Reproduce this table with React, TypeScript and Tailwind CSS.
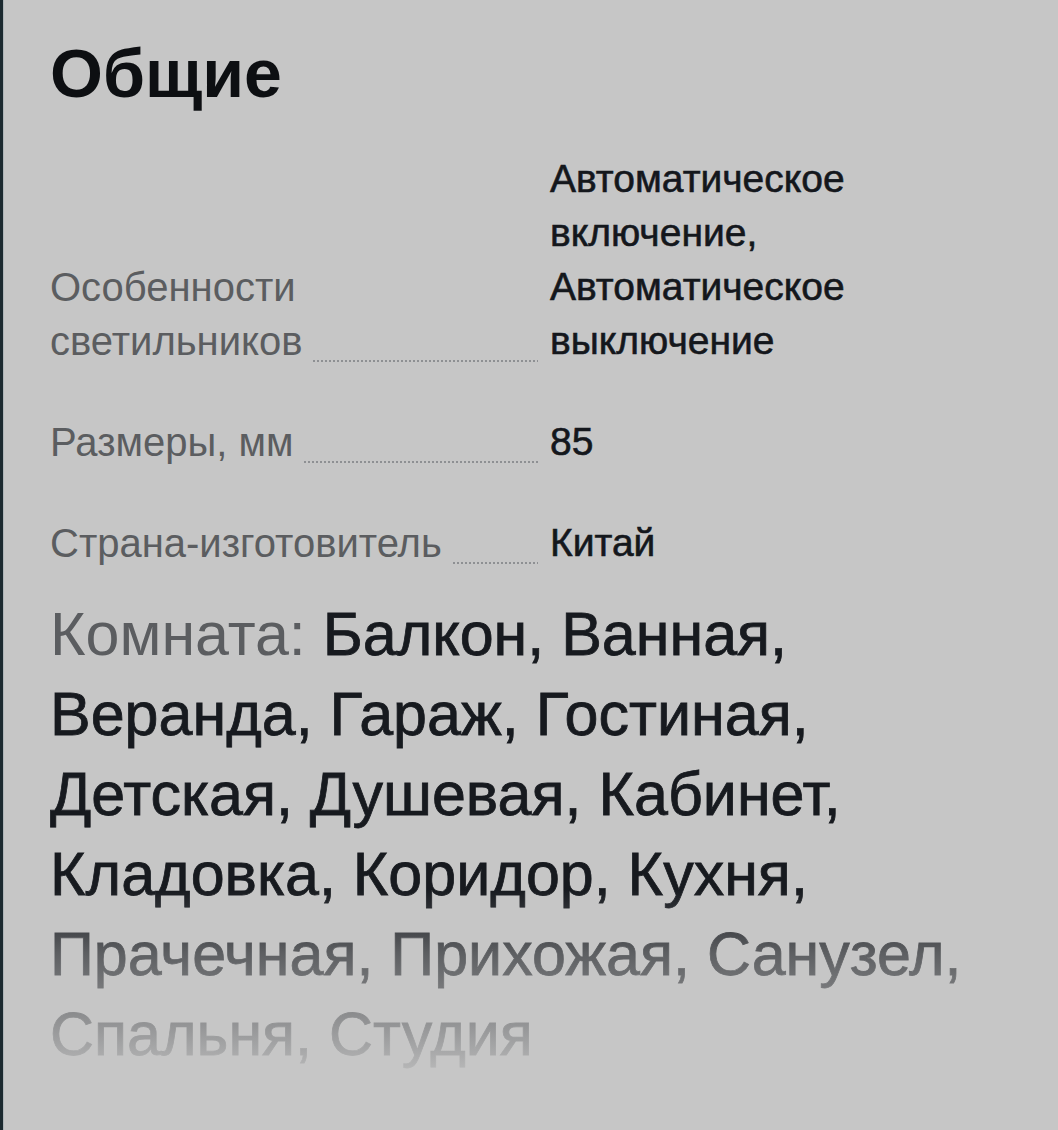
import React from 'react';

const specs = [
  {
    label: ['Особенности', 'светильников'],
    value: ['Автоматическое', 'включение,', 'Автоматическое', 'выключение'],
  },
  { label: ['Размеры, мм'], value: ['85'] },
  { label: ['Страна-изготовитель'], value: ['Китай'] },
];

const rooms = [
  'Балкон, Ванная,',
  'Веранда, Гараж, Гостиная,',
  'Детская, Душевая, Кабинет,',
  'Кладовка, Коридор, Кухня,',
  'Прачечная, Прихожая, Санузел,',
  'Спальня, Студия',
];

const App: React.FC = () => {
  return (
    <div
      className="min-h-screen bg-[#c6c6c6] border-l-[3px] border-[#1c2a30]"
      style={{ fontFamily: '"Liberation Sans", Arial, sans-serif' }}
    >
      <div className="min-h-screen border-l border-[#aeb5b8] pl-[46px] pt-[39px] pb-[40px]">
        {/* Title */}
        <h2 className="text-[68px] leading-none font-bold text-[#0d0f12]">Общие</h2>

        {/* Spec rows */}
        <div className="mt-[45px] flex flex-col gap-[47px]">
          {specs.map((row, i) => (
            <div key={i} className="flex items-end">
              <div className="w-[488px] shrink-0 flex items-end">
                <span className="text-[40px] leading-[54px] text-[#5b5d60] whitespace-nowrap">
                  {row.label.map((l, j) => (
                    <React.Fragment key={j}>
                      {j > 0 && <br />}
                      {l}
                    </React.Fragment>
                  ))}
                </span>
                <div className="flex-1 ml-[10px] mb-[6px] h-[2px] bg-[radial-gradient(circle,#8e9093_45%,transparent_55%)] bg-[length:4px_2px] bg-repeat-x" />
              </div>
              <div className="ml-[12px] text-[39px] leading-[54px] text-[#14171c] [-webkit-text-stroke:0.6px_#14171c]">
                {row.value.map((v, j) => (
                  <React.Fragment key={j}>
                    {j > 0 && <br />}
                    {v}
                  </React.Fragment>
                ))}
              </div>
            </div>
          ))}
        </div>

        {/* Rooms */}
        <div className="relative mt-[24px] text-[61px] leading-[80px] text-[#171a1f]">
          <p className="[-webkit-text-stroke:0.8px_#171a1f]">
            <span className="text-[#5b5d60] [-webkit-text-stroke:0px]">Комната: </span>
            {rooms.map((r, j) => (
              <React.Fragment key={j}>
                {j > 0 && <br />}
                {r}
              </React.Fragment>
            ))}
          </p>
          <div className="absolute inset-x-0 top-[295px] bottom-[-16px] bg-linear-to-b from-[#c6c6c6]/0 via-[#c6c6c6]/40 via-32% to-[#c6c6c6]" />
        </div>
      </div>
    </div>
  );
};

export default App;
